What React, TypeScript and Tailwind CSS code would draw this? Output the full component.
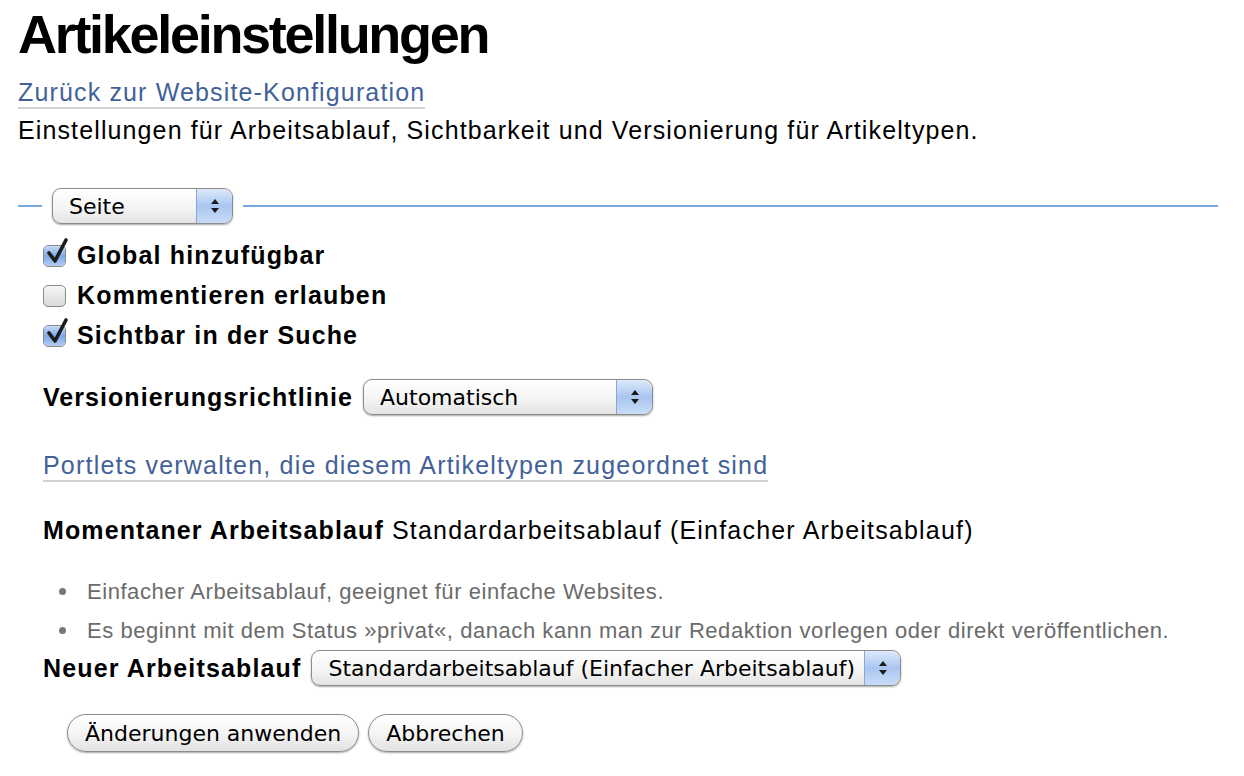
import type { ReactNode } from "react";

const sans = "font-['Liberation_Sans',Arial,Helvetica,sans-serif]";
const ui = "font-['DejaVu_Sans','Liberation_Sans',sans-serif]";

function Arrows() {
  return (
    <span className="flex h-full w-[36px] shrink-0 items-center justify-center rounded-r-[9px] border-l border-[#8aa6d6] bg-gradient-to-b from-[#dde9fa] via-[#a9c6f0] to-[#c9dcf7]">
      <svg width="10" height="16" viewBox="0 0 10 16">
        <path d="M5 1 L9 6 L1 6 Z" fill="#1a1a1a" />
        <path d="M5 15 L9 10 L1 10 Z" fill="#1a1a1a" />
      </svg>
    </span>
  );
}

function Select({ value, width }: { value: string; width: string }) {
  return (
    <span
      className={`${width} ${ui} flex h-[36px] shrink-0 items-center overflow-hidden rounded-[9px] border border-[#8c8c8c] bg-gradient-to-b from-white via-[#f6f6f6] to-[#e4e4e4] text-[22px] text-black shadow-[0_1px_2px_rgba(0,0,0,0.35)]`}
    >
      <span className="flex-1 truncate pl-[16px]">{value}</span>
      <Arrows />
    </span>
  );
}

function Check({ on, children }: { on: boolean; children: ReactNode }) {
  return (
    <label className="flex h-[40px] items-center gap-[11px]">
      <span className="relative h-[22px] w-[23px] shrink-0 rounded-[5px] border border-[#8a8a8a] bg-gradient-to-b from-[#f7f7f7] to-[#d9d9d9]">
        {on ? (
          <>
            <span className="absolute inset-0 rounded-[4px] bg-gradient-to-b from-[#c6daf7] via-[#7fa9e6] to-[#b2cdf3]" />
            <svg className="absolute -top-[8px] left-[2px]" width="24" height="28" viewBox="0 0 24 28">
              <path d="M3 15 L9 23 L20 2" fill="none" stroke="#1c1c1c" strokeWidth="3.6" strokeLinecap="round" strokeLinejoin="round" />
            </svg>
          </>
        ) : null}
      </span>
      <span className={`${sans} text-[25px] font-bold tracking-[1.15px] text-black`}>{children}</span>
    </label>
  );
}

function Button({ children }: { children: ReactNode }) {
  return (
    <button
      className={`${ui} h-[38px] rounded-full border border-[#8c8c8c] bg-gradient-to-b from-white via-[#f5f5f5] to-[#e2e2e2] px-[17px] text-[22px] text-black shadow-[0_1px_2px_rgba(0,0,0,0.35)]`}
    >
      {children}
    </button>
  );
}

export default function App() {
  return (
    <div className={`${sans} min-h-[776px] bg-white pl-[18px] pr-[26px] pt-[7px] text-black`}>
      <h1 className="text-[54px] font-bold leading-[54px] tracking-[-2.3px]">Artikeleinstellungen</h1>
      <a className="mt-[16px] inline-block border-b-2 border-[#d2d2d2] text-[25px] leading-[30px] tracking-[1.15px] text-[#436199]">
        Zurück zur Website-Konfiguration
      </a>
      <p className="mt-[6px] text-[25px] leading-[30px] tracking-[1.12px]">
        Einstellungen für Arbeitsablauf, Sichtbarkeit und Versionierung für Artikeltypen.
      </p>

      <div className="mt-[43px] flex items-center">
        <span className="h-[2px] w-[24px] bg-[#78a9dd]" />
        <span className="mx-[10px]">
          <Select value="Seite" width="w-[181px]" />
        </span>
        <span className="h-[2px] flex-1 bg-[#78a9dd]" />
      </div>

      <div className="pl-[25px]">
        <div className="mt-[12px]">
          <Check on>Global hinzufügbar</Check>
          <Check on={false}>Kommentieren erlauben</Check>
          <Check on>Sichtbar in der Suche</Check>
        </div>

        <div className="mt-[23px] flex items-center gap-[10px]">
          <span className="text-[25px] font-bold leading-[30px] tracking-[1.05px]">Versionierungsrichtlinie</span>
          <Select value="Automatisch" width="w-[290px]" />
        </div>

        <a className="mt-[35px] inline-block border-b-2 border-[#d2d2d2] text-[25px] leading-[30px] tracking-[1.2px] text-[#436199]">
          Portlets verwalten, die diesem Artikeltypen zugeordnet sind
        </a>

        <p className="mt-[33px] text-[25px] leading-[30px] tracking-[1.2px]">
          <span className="font-bold tracking-[1.1px]">Momentaner Arbeitsablauf</span> Standardarbeitsablauf (Einfacher Arbeitsablauf)
        </p>

        <ul className="mt-[27px] pl-[16px] text-[22px] leading-[39px] tracking-[0.55px] text-[#6b6b6b]">
          <li className="flex items-center gap-[21px]">
            <span className="h-[7px] w-[7px] rounded-full bg-[#777]" />
            Einfacher Arbeitsablauf, geeignet für einfache Websites.
          </li>
          <li className="flex items-center gap-[21px]">
            <span className="h-[7px] w-[7px] rounded-full bg-[#777]" />
            Es beginnt mit dem Status »privat«, danach kann man zur Redaktion vorlegen oder direkt veröffentlichen.
          </li>
        </ul>

        <div className="flex items-center gap-[10px]">
          <span className="text-[25px] font-bold leading-[30px] tracking-[1.15px]">Neuer Arbeitsablauf</span>
          <Select value="Standardarbeitsablauf (Einfacher Arbeitsablauf)" width="w-[590px]" />
        </div>

        <div className="mt-[28px] flex gap-[9px] pl-[24px]">
          <Button>Änderungen anwenden</Button>
          <Button>Abbrechen</Button>
        </div>
      </div>
    </div>
  );
}
